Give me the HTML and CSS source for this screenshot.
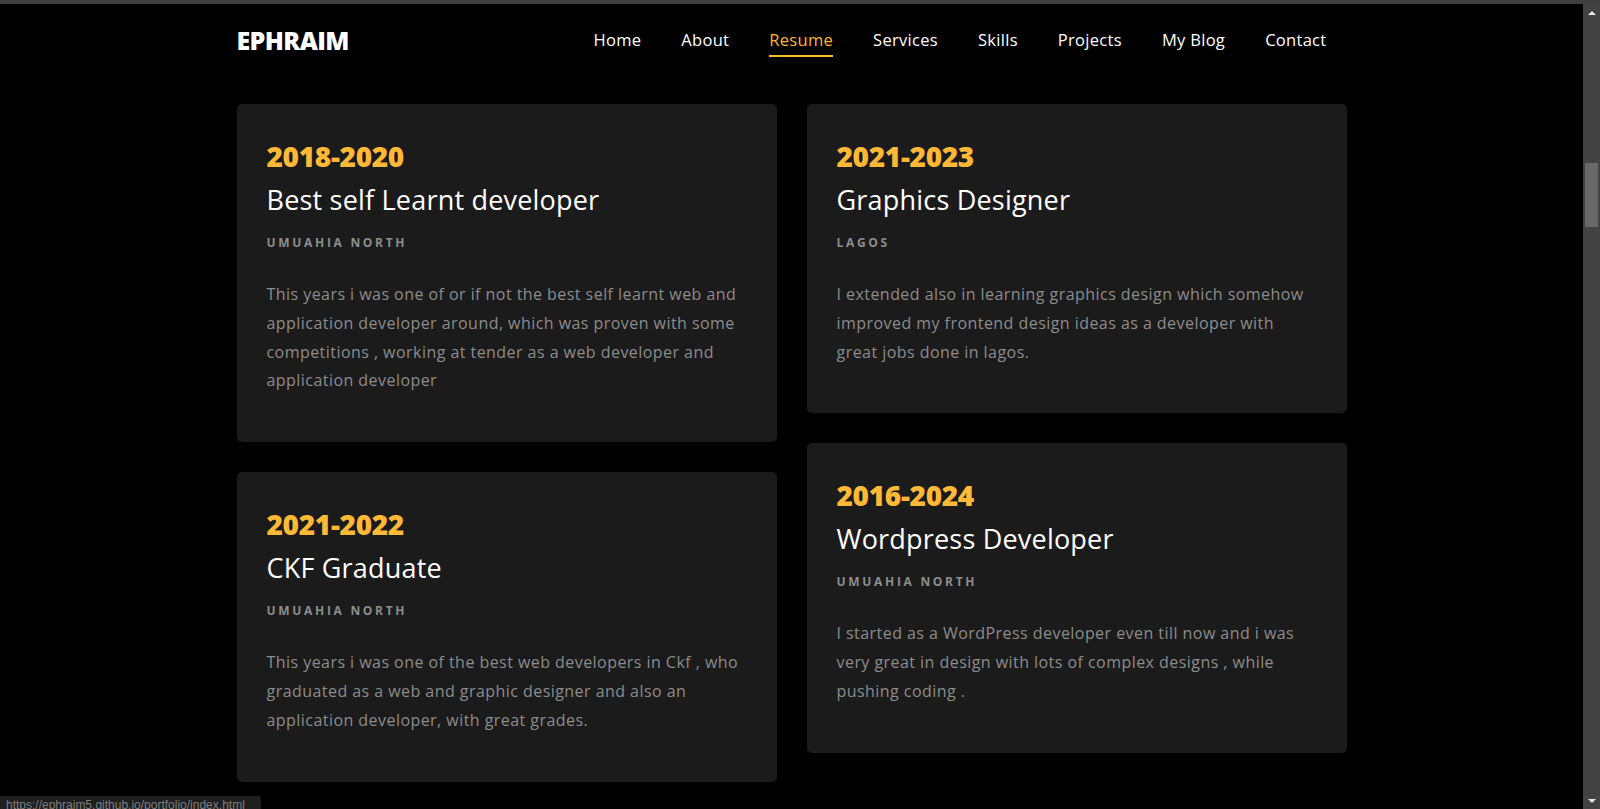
FILE: index.html
```html
<!DOCTYPE html>
<html lang="en">
<head>
<meta charset="utf-8">
<title>Ephraim - Resume</title>
<link rel="stylesheet" href="styles.css">
</head>
<body>
<div class="chrome-top"></div>
<div class="viewport">
  <div class="page">
    <header class="header">
      <div class="container header-inner">
        <a class="logo" href="#">EPHRAIM</a>
        <nav class="nav">
          <ul>
            <li><a href="#">Home</a></li>
            <li><a href="#">About</a></li>
            <li><a class="active" href="#">Resume</a></li>
            <li><a href="#">Services</a></li>
            <li><a href="#">Skills</a></li>
            <li><a href="#">Projects</a></li>
            <li><a href="#">My Blog</a></li>
            <li><a href="#">Contact</a></li>
          </ul>
        </nav>
      </div>
    </header>
    <section class="resume">
      <div class="container resume-grid">
        <div class="resume-col">
          <div class="resume-card">
            <h3 class="year">2018-2020</h3>
            <h4 class="role">Best self Learnt developer</h4>
            <div class="place">Umuahia North</div>
            <p class="desc">This years i was one of or if not the best self learnt web and application developer around, which was proven with some competitions , working at tender as a web developer and application developer</p>
          </div>
          <div class="resume-card">
            <h3 class="year">2021-2022</h3>
            <h4 class="role">CKF Graduate</h4>
            <div class="place">Umuahia North</div>
            <p class="desc">This years i was one of the best web developers in Ckf , who graduated as a web and graphic designer and also an application developer, with great grades.</p>
          </div>
        </div>
        <div class="resume-col">
          <div class="resume-card">
            <h3 class="year">2021-2023</h3>
            <h4 class="role">Graphics Designer</h4>
            <div class="place">Lagos</div>
            <p class="desc">I extended also in learning graphics design which somehow improved my frontend design ideas as a developer with great jobs done in lagos.</p>
          </div>
          <div class="resume-card">
            <h3 class="year">2016-2024</h3>
            <h4 class="role">Wordpress Developer</h4>
            <div class="place">Umuahia North</div>
            <p class="desc">I started as a WordPress developer even till now and i was very great in design with lots of complex designs , while pushing coding .</p>
          </div>
        </div>
      </div>
    </section>
  </div>
  <div class="scrollbar">
    <div class="sb-arrow sb-up"></div>
    <div class="sb-track"><div class="sb-thumb"></div></div>
    <div class="sb-arrow sb-down"></div>
  </div>
</div>
<div class="status">https://ephraim5.github.io/portfolio/index.html</div>
</body>
</html>
```
FILE: styles.css
```css
* { box-sizing: border-box; }
html, body {
  margin: 0;
  padding: 0;
  height: 809px;
  overflow: hidden;
  background: #000;
  font-family: "Open Sans", "Noto Sans", sans-serif;
  color: #fff;
}
.chrome-top {
  height: 4px;
  background: #3f3f3f;
}
.viewport {
  display: flex;
  height: 805px;
}
.page {
  flex: 1;
  min-width: 0;
}
.container {
  width: 1110px;
  margin: 0 auto;
}
.header-inner {
  display: flex;
  align-items: center;
  justify-content: space-between;
  height: 74px;
}
.logo {
  font-size: 25px;
  font-weight: 800;
  color: #fff;
  text-decoration: none;
  letter-spacing: -0.6px;
  margin-top: -2px;
}
.nav ul {
  display: flex;
  gap: 40px;
  list-style: none;
  margin: -4px 20px 0 0;
  padding: 0;
}
.nav a {
  display: block;
  font-size: 16.5px;
  font-weight: 500;
  letter-spacing: 0.3px;
  color: #fff;
  text-decoration: none;
  padding: 6px 0 4px;
  border-bottom: 2px solid transparent;
}
.nav a.active {
  color: #ffb727;
  border-bottom-color: #ffb727;
}
.resume {
  padding-top: 26px;
}
.resume-grid {
  display: grid;
  grid-template-columns: 1fr 1fr;
  gap: 30px;
  align-items: start;
}
.resume-col {
  display: flex;
  flex-direction: column;
  gap: 30px;
}
.resume-card {
  background: #1b1b1b;
  border-radius: 5px;
  padding: 34px 30px 47px;
}
.year {
  margin: 0;
  font-size: 28px;
  line-height: 36px;
  font-weight: 800;
  color: #ffb936;
  letter-spacing: -0.3px;
}
.role {
  margin: 8px 0 0;
  font-size: 27px;
  line-height: 36px;
  font-weight: 400;
  letter-spacing: 0.2px;
  color: #fff;
}
.place {
  margin-top: 15px;
  font-size: 12px;
  line-height: 20px;
  font-weight: 700;
  letter-spacing: 2.7px;
  text-transform: uppercase;
  color: #8d8d8d;
}
.desc {
  margin: 27px 0 0;
  font-size: 16px;
  line-height: 28.8px;
  letter-spacing: 0.45px;
  color: #8c8c8c;
}
.scrollbar {
  width: 17px;
  background: #434343;
  display: flex;
  flex-direction: column;
}
.sb-arrow {
  height: 17px;
  display: flex;
  align-items: center;
  justify-content: center;
}
.sb-up::before {
  content: "";
  border-left: 4px solid transparent;
  border-right: 4px solid transparent;
  border-bottom: 4px solid #e8e8e8;
}
.sb-down::before {
  content: "";
  border-left: 4px solid transparent;
  border-right: 4px solid transparent;
  border-top: 4px solid #e8e8e8;
}
.sb-track {
  flex: 1;
  padding: 0 2px;
}
.sb-thumb {
  margin-top: 142px;
  height: 64px;
  background: #686868;
}
.status {
  position: fixed;
  left: 0;
  bottom: -7px;
  height: 20px;
  width: 261px;
  padding: 1px 6px 0;
  background: #1f1f1f;
  border-top-right-radius: 3px;
  color: #7e7e7e;
  font-family: "Liberation Sans", Arial, sans-serif;
  font-size: 12px;
  line-height: 16px;
  white-space: nowrap;
  overflow: hidden;
}
```
